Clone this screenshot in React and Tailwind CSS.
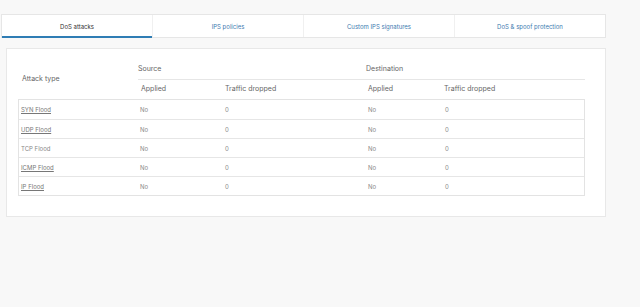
import React from "react";

const rows = [
  { name: "SYN Flood", link: true },
  { name: "UDP Flood", link: true },
  { name: "TCP Flood", link: false },
  { name: "ICMP Flood", link: true },
  { name: "IP Flood", link: true },
];

const tabs = [
  { label: "DoS attacks", active: true },
  { label: "IPS policies" },
  { label: "Custom IPS signatures" },
  { label: "DoS & spoof protection" },
];

export default function App() {
  return (
    <div
      className="w-[640px] h-[307px] bg-[#f8f8f8] overflow-hidden text-[7px] text-[#555] antialiased"
      style={{ fontFamily: "Inter, 'Noto Sans', sans-serif" }}
    >
      <div className="pt-[14px] pl-[1px]">
        <div className="w-[605px] h-[24px] bg-white border border-[#e6e6e6] flex text-[6px]">
          {tabs.map((t, i) => (
            <div
              key={t.label}
              className={
                "flex-1 flex items-center justify-center relative " +
                (i > 0 ? "border-l border-[#f0f0f0] " : "") +
                (t.active ? "text-[#333]" : "text-[#3d7bb0]")
              }
            >
              {t.label}
              {t.active && (
                <div className="absolute left-0 right-0 bottom-[-1px] h-[2px] bg-[#2f7db4]" />
              )}
            </div>
          ))}
        </div>
      </div>
      <div className="ml-[6px] mt-[10px] w-[600px] h-[169px] bg-white border border-[#e8e8e8] pt-[11px] pl-[11px]">
        <div className="w-[567px]">
          <div className="grid grid-cols-[120px_85px_143px_76px_143px] grid-rows-[20px_19px] text-[7px] text-[#666]">
            <div className="row-span-2 flex items-center pl-[4px]">Attack type</div>
            <div className="col-span-2 flex items-center border-b border-[#e6e6e6]">Source</div>
            <div className="col-span-2 flex items-center border-b border-[#e6e6e6]">Destination</div>
            <div className="flex items-center pl-[3px]">Applied</div>
            <div className="flex items-center pl-[2px]">Traffic dropped</div>
            <div className="flex items-center pl-[2px]">Applied</div>
            <div className="flex items-center pl-[2px]">Traffic dropped</div>
          </div>
          <div className="border border-[#e3e3e3]">
            {rows.map((r, i) => (
              <div
                key={r.name}
                className={
                  "grid grid-cols-[119px_85px_143px_76px_142px] h-[19px] items-center text-[6px] text-[#888] " +
                  (i > 0 ? "border-t border-[#e6e6e6]" : "")
                }
              >
                <div className="pl-[2px]">
                  <span className={r.link ? "underline text-[#777]" : "text-[#888]"}>{r.name}</span>
                </div>
                <div className="pl-[2px]">No</div>
                <div className="pl-[2px]">0</div>
                <div className="pl-[2px]">No</div>
                <div className="pl-[3px]">0</div>
              </div>
            ))}
          </div>
        </div>
      </div>
    </div>
  );
}
